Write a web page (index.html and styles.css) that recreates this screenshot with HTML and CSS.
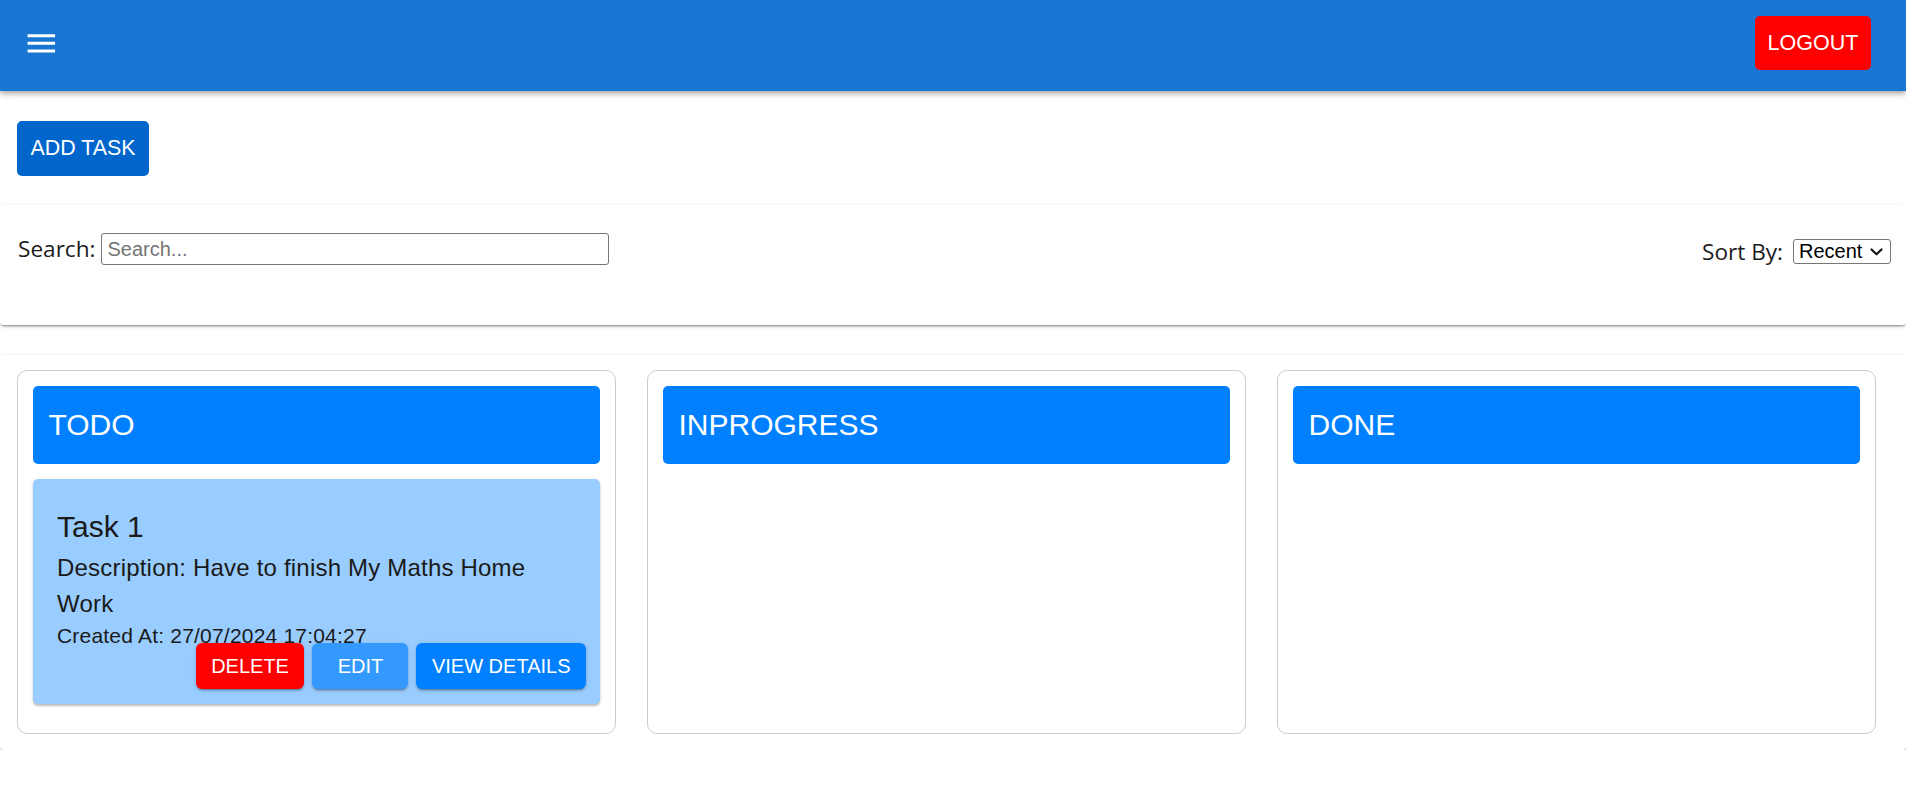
FILE: index.html
```html
<!DOCTYPE html>
<html lang="en">
<head>
<meta charset="utf-8">
<title>Task Board</title>
<link rel="stylesheet" href="styles.css">
</head>
<body>
<header class="appbar">
  <button class="menu-btn" aria-label="menu">
    <svg viewBox="0 0 24 24" class="menu-icon"><path d="M3 18h18v-2H3v2zm0-5h18v-2H3v2zm0-7v2h18V6H3z"/></svg>
  </button>
  <button class="logout-btn">LOGOUT</button>
</header>

<main>
  <div class="actions-row">
    <button class="add-btn">ADD TASK</button>
  </div>

  <section class="paper filters">
    <label class="search">
      <span class="field-label">Search:</span>
      <input class="search-input" type="text" placeholder="Search...">
    </label>
    <div class="sort">
      <span class="field-label sort-label">Sort By:</span>
      <div class="select-wrap">
        <select class="sort-select">
          <option>Recent</option>
          <option>Oldest</option>
        </select>
        <svg class="chevron" viewBox="0 0 13 8"><path d="M1.5 1.5 L6.5 6.3 L11.5 1.5" fill="none" stroke="#111" stroke-width="2.2" stroke-linecap="round" stroke-linejoin="round"/></svg>
      </div>
    </div>
  </section>

  <section class="paper board">
    <div class="column">
      <div class="col-head">TODO</div>
      <div class="task">
        <h3 class="task-title">Task 1</h3>
        <p class="task-desc">Description: Have to finish My Maths Home Work</p>
        <p class="task-date">Created At: 27/07/2024 17:04:27</p>
        <div class="task-actions">
          <button class="t-btn t-delete">DELETE</button>
          <button class="t-btn t-edit">EDIT</button>
          <button class="t-btn t-view">VIEW DETAILS</button>
        </div>
      </div>
    </div>
    <div class="column">
      <div class="col-head">INPROGRESS</div>
    </div>
    <div class="column">
      <div class="col-head">DONE</div>
    </div>
  </section>
</main>
</body>
</html>
```

FILE: styles.css
```css
* {
  box-sizing: border-box;
}

html, body {
  margin: 0;
  padding: 0;
  background: #ffffff;
}

body {
  font-family: "Liberation Sans", Arial, sans-serif;
  color: #212121;
}

button {
  font-family: "Liberation Sans", Arial, sans-serif;
  cursor: pointer;
}

/* ---------- App bar ---------- */
.appbar {
  position: relative;
  z-index: 2;
  height: 91px;
  background: #1976d2;
  display: flex;
  justify-content: space-between;
  align-items: flex-start;
  padding: 0 35px 0 22.7px;
  box-shadow: 0 2px 4px -1px rgba(0,0,0,0.2), 0 4px 5px 0 rgba(0,0,0,0.14), 0 1px 10px 0 rgba(0,0,0,0.12);
}

.menu-btn {
  margin-top: 25.2px;
  padding: 0;
  border: none;
  background: transparent;
  width: 36.7px;
  height: 36.7px;
  display: flex;
}

.menu-icon {
  width: 36.7px;
  height: 36.7px;
  fill: #ffffff;
}

.logout-btn {
  margin-top: 16px;
  height: 54px;
  width: 116px;
  padding: 0;
  border: none;
  border-radius: 5px;
  background: #ff0000;
  color: #ffffff;
  font-size: 21.5px;
}

/* ---------- Add task row ---------- */
.actions-row {
  padding: 30px 17px 29px;
}

.add-btn {
  height: 55px;
  width: 132px;
  padding: 0;
  border: none;
  border-radius: 5px;
  background: #0066cc;
  color: #ffffff;
  font-size: 21.4px;
}

/* ---------- Papers ---------- */
.paper {
  background: #ffffff;
  border-radius: 4px;
  box-shadow: 0 3px 1px -2px rgba(0,0,0,0.22), 0 2px 2px 0 rgba(0,0,0,0.16), 0 1px 5px 0 rgba(0,0,0,0.12);
}

.filters {
  height: 120px;
  padding: 28px 15px 0 18px;
  display: flex;
  justify-content: space-between;
  align-items: flex-start;
}

.search {
  display: flex;
  align-items: center;
  height: 32px;
}

.field-label {
  font-family: "Open Sans", "Noto Sans", sans-serif;
  font-size: 22.6px;
  color: #1b1b1b;
}

.search .field-label {
  margin-right: 6px;
  position: relative;
  top: -1px;
}

.search-input {
  width: 508px;
  height: 32px;
  border: 1px solid #767676;
  border-radius: 3px;
  padding: 0 5px;
  font-family: "Liberation Sans", Arial, sans-serif;
  font-size: 20px;
  color: #111;
  outline: none;
}

.search-input::placeholder {
  color: #757575;
}

.sort {
  display: flex;
  align-items: center;
  height: 32px;
  margin-top: 2px;
}

.sort-label {
  margin-right: 10px;
}

.select-wrap {
  position: relative;
  width: 98px;
  height: 25px;
}

.sort-select {
  appearance: none;
  -webkit-appearance: none;
  width: 98px;
  height: 25px;
  border: 1px solid #767676;
  border-radius: 3px;
  background: #ffffff;
  padding: 0 0 0 5px;
  font-family: "Liberation Sans", Arial, sans-serif;
  font-size: 20px;
  color: #000;
  line-height: 23px;
}

.chevron {
  position: absolute;
  right: 8px;
  top: 9px;
  width: 13px;
  height: 8px;
  pointer-events: none;
}

/* ---------- Board ---------- */
.board {
  margin-top: 30px;
  padding: 15px 30px 16px 17px;
  display: grid;
  grid-template-columns: repeat(3, 1fr);
  column-gap: 31px;
}

.column {
  min-height: 364px;
  border: 1px solid #cccccc;
  border-radius: 10px;
  padding: 15px;
  display: flex;
  flex-direction: column;
  gap: 15px;
}

.col-head {
  height: 78px;
  background: #0080ff;
  border-radius: 5px;
  color: #ffffff;
  font-size: 30px;
  display: flex;
  align-items: center;
  padding-left: 15.5px;
}

.task {
  position: relative;
  background: #99ccff;
  border-radius: 5px;
  padding: 31px 24px 56px 24px;
  box-shadow: 0 2px 2px rgba(0,0,0,0.22), 0 1px 4px rgba(0,0,0,0.08);
  color: #1a1a1a;
}

.task-title {
  margin: 0;
  font-size: 30px;
  line-height: 34px;
  font-weight: normal;
}

.task-desc {
  margin: 6px 0 0;
  font-size: 24px;
  line-height: 36px;
  letter-spacing: 0.2px;
}

.task-date {
  margin: 2px 0 0;
  font-size: 21px;
  line-height: 24px;
  letter-spacing: 0.2px;
}

.task-actions {
  position: absolute;
  right: 14px;
  bottom: 15px;
  display: flex;
  gap: 8px;
}

.t-btn {
  height: 46px;
  min-width: 96px;
  padding: 0 15.5px;
  border: none;
  border-radius: 6px;
  color: #ffffff;
  font-size: 20px;
  box-shadow: 0 3px 1px -2px rgba(0,0,0,0.2), 0 2px 2px 0 rgba(0,0,0,0.14), 0 1px 5px 0 rgba(0,0,0,0.12);
}

.t-delete {
  background: #ff0000;
}

.t-edit {
  background: #3399ff;
}

.t-view {
  background: #0080ff;
}
```
